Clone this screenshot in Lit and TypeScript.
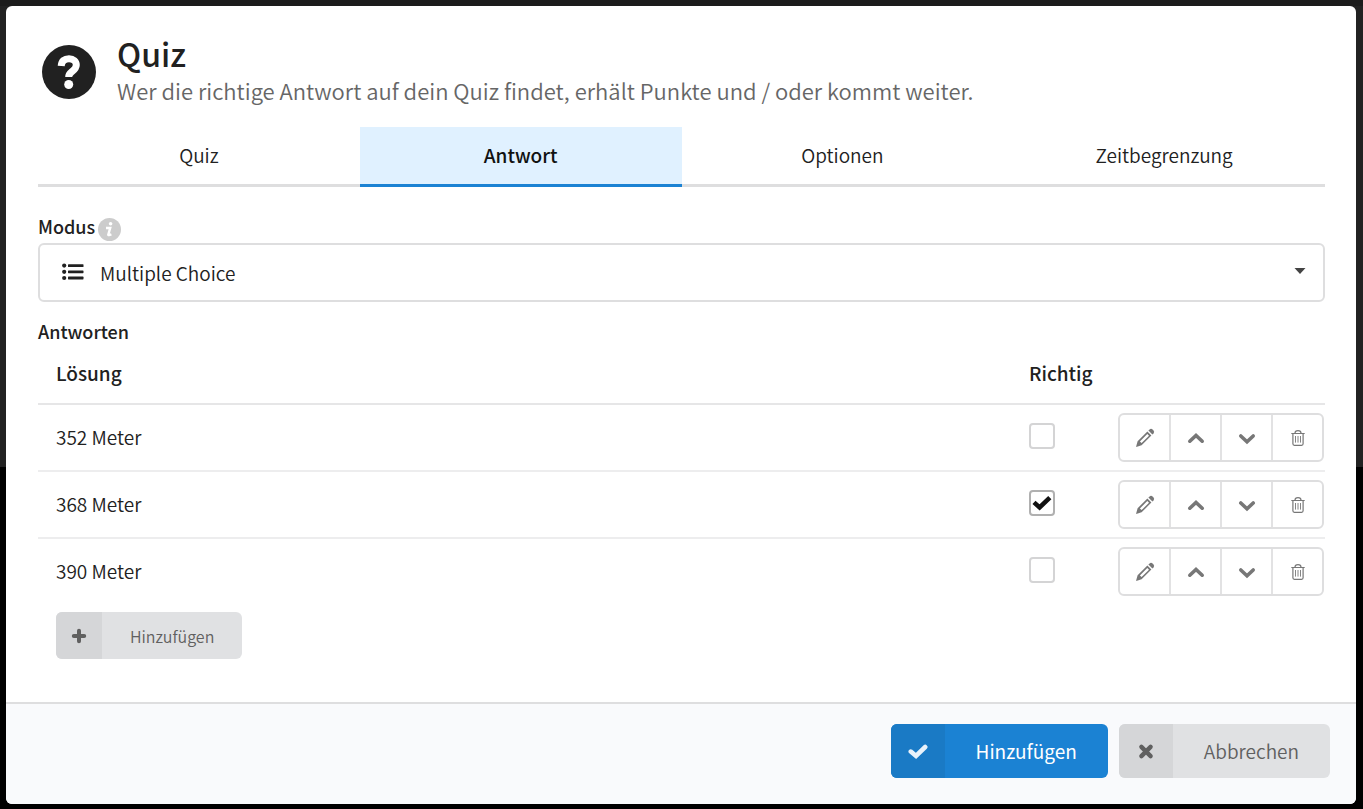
import { LitElement, html, svg, css } from "lit";
import { customElement, state } from "lit/decorators.js";

const check = svg`<path d="M2 9.4 L7.6 14.4 L17.8 4.6" fill="none" stroke="currentColor" stroke-width="4.6" stroke-linecap="butt"/>`;

const icons = {
  list: html`<svg class="list-icon" viewBox="0 0 22 18" aria-hidden="true">
    <g fill="currentColor"><circle cx="2.2" cy="2.6" r="2.1"/><circle cx="2.2" cy="8.8" r="2.1"/><circle cx="2.2" cy="15" r="2.1"/>
    <rect x="6" y="1.2" width="15.5" height="2.8" rx="0.6"/><rect x="6" y="7.4" width="15.5" height="2.8" rx="0.6"/><rect x="6" y="13.6" width="15.5" height="2.8" rx="0.6"/></g></svg>`,
  pencil: html`<svg class="icon" viewBox="0 0 20 20" aria-hidden="true">
    <path fill="currentColor" fill-rule="evenodd" d="M1 19 L2.6 13.3 L12.4 3.6 L16.4 7.6 L6.6 17.3 Z M4.9 13.4 L6.6 15.1 L14 7.7 L12.3 6 Z"/>
    <path fill="currentColor" d="M13.4 2.6 L14.6 1.4 Q16.2 0.2 17.8 1.7 L18.4 2.3 Q19.8 3.9 18.6 5.4 L17.4 6.6 Z"/></svg>`,
  up: html`<svg class="icon" viewBox="0 0 20 20" aria-hidden="true"><path d="M3.8 13.2 L10 7.4 L16.2 13.2" fill="none" stroke="currentColor" stroke-width="3.6" stroke-linecap="round"/></svg>`,
  down: html`<svg class="icon" viewBox="0 0 20 20" aria-hidden="true"><path d="M3.8 8 L10 13.8 L16.2 8" fill="none" stroke="currentColor" stroke-width="3.6" stroke-linecap="round"/></svg>`,
  trash: html`<svg class="icon" viewBox="0 0 20 20" aria-hidden="true"><g fill="none" stroke="currentColor">
    <path stroke-width="1.2" d="M3.3 5.5 H16.7 M7 5 C7 3 8 2.6 10 2.6 S13 3 13 5 M4.9 5.5 V15.8 Q4.9 17.3 6.4 17.3 H13.6 Q15.1 17.3 15.1 15.8 V5.5"/>
    <path stroke-width="0.9" d="M7.5 8 V14.6 M10 8 V14.6 M12.5 8 V14.6"/></g></svg>`,
  plus: html`<svg class="icon" viewBox="0 0 20 20" aria-hidden="true"><path d="M10 4.8 V15.2 M4.8 10 H15.2" fill="none" stroke="currentColor" stroke-width="4" stroke-linecap="round"/></svg>`,
  ok: html`<svg class="icon" viewBox="0 0 20 20" aria-hidden="true"><path d="M2.8 10.6 L8 15 L17.2 6" fill="none" stroke="currentColor" stroke-width="4.6" stroke-linecap="round"/></svg>`,
  cross: html`<svg class="icon" viewBox="0 0 20 20" aria-hidden="true"><path d="M5.4 5.9 L14.6 15.1 M14.6 5.9 L5.4 15.1" fill="none" stroke="currentColor" stroke-width="4.4" stroke-linecap="round"/></svg>`,
};

interface Answer {
  text: string;
  correct: boolean;
}

@customElement("app-root")
export class AppRoot extends LitElement {
  static styles = css`
    :host {
      display: flex;
      box-sizing: border-box;
      min-height: 100vh;
      padding: 6px 7px 5px 6px;
      background: linear-gradient(#1c1c1c 0 6px, #222 6px 467px, #000 467px);
      font-family: "Noto Sans CJK SC", "Source Sans Pro", sans-serif;
      font-weight: 350;
      font-size: 19px;
      line-height: 26px;
      color: #212121;
    }
    * { box-sizing: border-box; }
    button, select {
      font: inherit;
      color: inherit;
      margin: 0;
      padding: 0;
      border: 0;
      background: none;
      cursor: pointer;
    }
    svg { display: block; }
    .icon { width: 20px; height: 20px; }
    .modal {
      flex: 1;
      min-width: 0;
      display: flex;
      flex-direction: column;
      background: #fff;
      border-radius: 6px;
      overflow: hidden;
    }
    .content { flex: 1; padding: 27px 31px 43px 32px; }
    .head { display: flex; gap: 21px; padding-left: 4px; }
    .head-icon { width: 54px; height: 54px; margin-top: 12px; flex: none; }
    h1 { margin: 0; font-size: 32px; line-height: 40px; font-weight: 500; color: #212121; }
    .sub { margin: 1px 0 0; font-size: 22px; line-height: 32px; color: #666; }
    .tabs { display: grid; grid-template-columns: repeat(4, 1fr); margin-top: 21px; }
    .tab { height: 60px; padding-bottom: 2px; border-bottom: 3px solid #dededf; }
    .tab.active { background: #e0f1ff; border-color: #1b82d3; font-weight: 500; color: #111; }
    .label { display: flex; align-items: center; gap: 3px; margin-top: 26px; font-weight: 500; font-size: 18px; }
    .label label { padding-bottom: 2px; }
    .info { width: 23px; height: 23px; margin-top: 4px; }
    .select { display: grid; align-items: center; margin-top: 2px; }
    .select > * { grid-area: 1 / 1; }
    .select select {
      appearance: none;
      width: 100%;
      height: 59px;
      padding: 0 60px;
      border: 2px solid #dededf;
      border-radius: 6px;
      background: #fff;
    }
    .list-icon { width: 22px; height: 18px; margin: 0 0 2px 24px; color: #212121; pointer-events: none; }
    .caret { width: 12px; height: 6px; justify-self: end; margin: 0 19px 4px 0; pointer-events: none; }
    .caption { margin: 16px 0 1px; font-size: 18px; font-weight: 500; }
    table { width: 100%; border-collapse: separate; border-spacing: 0; table-layout: fixed; }
    th, td { padding: 0 0 2px; text-align: left; }
    th { height: 60px; font-weight: 500; border-bottom: 2px solid #e6e6e7; }
    th:first-child, td:first-child { padding-left: 18px; }
    .col-check { width: 89px; padding-left: 12px; }
    .col-tools { width: 219px; padding: 0 0 0 12px; }
    td { height: 67px; border-bottom: 2px solid #ededee; }
    tr:last-child td { border-color: transparent; }
    .check { display: grid; width: 26px; height: 26px; margin-bottom: 2px; }
    .check > * { grid-area: 1 / 1; }
    .check input {
      appearance: none;
      width: 26px;
      height: 26px;
      margin: 0;
      border: 2px solid #d4d4d5;
      border-radius: 4px;
      background: #fff;
    }
    .check input:checked { border-color: #b0b0b0; }
    .check svg { width: 20px; height: 20px; margin: 3px; color: #111; visibility: hidden; pointer-events: none; }
    .check input:checked + svg { visibility: visible; }
    .tools {
      display: grid;
      grid-template-columns: 49px repeat(3, 1fr);
      width: 206px;
      height: 49px;
      border: 2px solid #dededf;
      border-radius: 6px;
      color: #777;
    }
    .tools button { display: grid; place-items: center; }
    .tools button + button { border-left: 2px solid #e2e2e3; }
    .btn {
      display: grid;
      grid-template-columns: 54px 1fr;
      height: 54px;
      border-radius: 6px;
      overflow: hidden;
      background: #e0e1e3;
      color: #606060;
    }
    .btn > span { display: grid; place-items: center; height: 100%; }
    .btn .lead { background: #d5d6d8; }
    .btn .text { padding: 0 31px; }
    .btn.primary { background: #1b82d3; color: #fff; font-weight: 400; }
    .btn.primary .lead { background: #1a7ac5; color: #e8f2fb; }
    .btn.small { grid-template-columns: 46px 1fr; height: 47px; margin: 6px 0 0 18px; font-size: 16px; }
    .btn.small .text { padding: 0 28px; }
    .foot {
      display: flex;
      justify-content: flex-end;
      gap: 11px;
      padding: 20px 26px 26px;
      border-top: 2px solid #dededf;
      background: #f9fafc;
    }
  `;

  @state() private active = 1;
  @state() private answers: Answer[] = [
    { text: "352 Meter", correct: false },
    { text: "368 Meter", correct: true },
    { text: "390 Meter", correct: false },
  ];

  private row(a: Answer) {
    return html`<tr>
      <td>${a.text}</td>
      <td class="col-check">
        <label class="check">
          <input type="checkbox" aria-label=${a.text} .checked=${a.correct} />
          <svg viewBox="0 0 20 20" aria-hidden="true">${check}</svg>
        </label>
      </td>
      <td class="col-tools">
        <div class="tools">
          <button type="button" aria-label="Bearbeiten">${icons.pencil}</button>
          <button type="button" aria-label="Nach oben">${icons.up}</button>
          <button type="button" aria-label="Nach unten">${icons.down}</button>
          <button type="button" aria-label="Löschen">${icons.trash}</button>
        </div>
      </td>
    </tr>`;
  }

  render() {
    return html`
      <main class="modal">
        <div class="content">
          <header class="head">
            <svg class="head-icon" viewBox="0 0 54 54" aria-hidden="true">
              <circle cx="27" cy="27" r="27" fill="#212121" />
              <path d="M19.2 21 C19.5 16 22.5 13.7 27 13.7 C31.5 13.7 34.3 16.5 34.3 20 C34.3 23.5 32 25 29.5 27 C27.3 28.7 26.7 29.5 26.7 32" fill="none" stroke="#fff" stroke-width="7" />
              <circle cx="26.7" cy="39.5" r="4.5" fill="#fff" />
            </svg>
            <div>
              <h1>Quiz</h1>
              <p class="sub">Wer die richtige Antwort auf dein Quiz findet, erhält Punkte und / oder kommt weiter.</p>
            </div>
          </header>
          <nav class="tabs" role="tablist">
            ${["Quiz", "Antwort", "Optionen", "Zeitbegrenzung"].map(
              (t, i) => html`<button type="button" role="tab" aria-selected=${i === this.active}
                class="tab ${i === this.active ? "active" : ""}" @click=${() => (this.active = i)}>${t}</button>`
            )}
          </nav>
          <div class="label">
            <label for="mode">Modus</label>
            <svg class="info" viewBox="0 0 23 23" aria-hidden="true">
              <circle cx="11.5" cy="11.5" r="11.5" fill="#ccc" />
              <circle cx="12.6" cy="5.8" r="1.8" fill="#fff" />
              <path d="M8 10 H12.2 L10.2 16.8 Q10.2 17.6 13.4 16.4" fill="none" stroke="#fff" stroke-width="2.4" />
            </svg>
          </div>
          <div class="select">
            <select id="mode"><option>Multiple Choice</option></select>
            ${icons.list}
            <svg class="caret" viewBox="0 0 12 6" aria-hidden="true"><path d="M0.5 0 H11.5 L6 6 Z" fill="#444" /></svg>
          </div>
          <h2 class="caption">Antworten</h2>
          <table>
            <thead>
              <tr><th>Lösung</th><th class="col-check">Richtig</th><th class="col-tools"></th></tr>
            </thead>
            <tbody>${this.answers.map((a) => this.row(a))}</tbody>
          </table>
          <button type="button" class="btn small">
            <span class="lead">${icons.plus}</span><span class="text">Hinzufügen</span>
          </button>
        </div>
        <footer class="foot">
          <button type="button" class="btn primary">
            <span class="lead">${icons.ok}</span><span class="text">Hinzufügen</span>
          </button>
          <button type="button" class="btn">
            <span class="lead">${icons.cross}</span><span class="text">Abbrechen</span>
          </button>
        </footer>
      </main>
    `;
  }
}
